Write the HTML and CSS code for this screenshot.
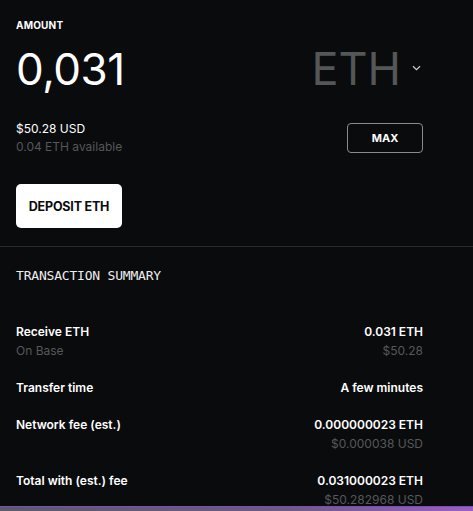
FILE: index.html
```html
<!DOCTYPE html>
<html lang="en">

<head>
    <meta charset="UTF-8">
    <meta name="viewport" content="width=device-width, initial-scale=1.0">
    <title>deposit</title>
    <link rel="stylesheet" href="styles.css">
</head>

<body>

    <section class="amount-panel">
        <div class="label">AMOUNT</div>
        <div class="amount-row">
            <div class="amount-value">0,031</div>
            <div class="token-select">
                <span class="token-name">ETH</span>
                <svg class="chevron" width="9" height="6" viewBox="0 0 9 6">
                    <path d="M1 1.2 L4.5 4.6 L8 1.2" fill="none" stroke="#cfcfcf" stroke-width="1.2" />
                </svg>
            </div>
        </div>

        <div class="balance-row">
            <div>
                <div class="usd">$50.28 USD</div>
                <div class="available">0.04 ETH available</div>
            </div>
            <button class="max-btn">MAX</button>
        </div>

        <button class="deposit-btn">DEPOSIT ETH</button>
    </section>

    <section class="summary">
        <h2>TRANSACTION SUMMARY</h2>

        <div class="summary-row">
            <div>
                <div class="key">Receive ETH</div>
                <div class="sub">On Base</div>
            </div>
            <div class="right">
                <div class="val">0.031 ETH</div>
                <div class="sub">$50.28</div>
            </div>
        </div>

        <div class="summary-row">
            <div class="key">Transfer time</div>
            <div class="val">A few minutes</div>
        </div>

        <div class="summary-row">
            <div class="key">Network fee (est.)</div>
            <div class="right">
                <div class="val">0.000000023 ETH</div>
                <div class="sub">$0.000038 USD</div>
            </div>
        </div>

        <div class="summary-row">
            <div class="key">Total with (est.) fee</div>
            <div class="right">
                <div class="val">0.031000023 ETH</div>
                <div class="sub">$50.282968 USD</div>
            </div>
        </div>
    </section>

    <div class="bottom-bar"></div>

</body>

</html>
```

FILE: styles.css
```css
body {
    font-family: Inter, "Noto Sans", sans-serif;
    background-color: #0a0b0d;
    color: #fff;
    margin: 0;
    padding: 0;
    height: 511px;
    overflow: hidden;
    position: relative;
}

.amount-panel {
    padding: 18px 50px 18px 16px;
    border-bottom: 1px solid #2a2b2e;
}

.label {
    font-size: 10px;
    font-weight: 700;
    letter-spacing: 0.2px;
    line-height: 14px;
}

.amount-row {
    display: flex;
    justify-content: space-between;
    align-items: center;
    margin-top: 10px;
    height: 54px;
}

.amount-value {
    font-size: 44px;
    font-weight: 400;
    letter-spacing: -0.5px;
    line-height: 54px;
}

.token-select {
    display: flex;
    align-items: center;
    gap: 11px;
    padding-right: 2px;
}

.token-name {
    font-size: 45px;
    color: #555657;
    line-height: 54px;
}

.chevron {
    margin-top: -3px;
}

.balance-row {
    display: flex;
    justify-content: space-between;
    align-items: center;
    margin-top: 24px;
}

.usd {
    font-size: 12px;
    line-height: 18px;
}

.available {
    font-size: 12px;
    line-height: 18px;
    color: #55575a;
}

.max-btn {
    background: transparent;
    border: 1px solid #8a8b8d;
    border-radius: 4px;
    color: #fff;
    font-family: Inter, sans-serif;
    font-size: 11px;
    font-weight: 700;
    width: 76px;
    height: 30px;
}

.deposit-btn {
    margin-top: 28px;
    background: #fff;
    color: #0a0b0d;
    border: none;
    border-radius: 5px;
    font-family: Inter, sans-serif;
    font-size: 12.5px;
    font-weight: 700;
    letter-spacing: -0.2px;
    width: 106px;
    height: 44px;
}

.summary {
    padding: 21px 50px 0 16px;
}

.summary h2 {
    font-family: "DejaVu Sans Mono", monospace;
    font-size: 13px;
    font-weight: 400;
    color: #eeeeee;
    letter-spacing: -0.2px;
    line-height: 16px;
    margin: 0 0 38px;
}

.summary-row {
    display: flex;
    justify-content: space-between;
    align-items: flex-start;
    font-size: 12px;
    line-height: 19px;
    margin-bottom: 18px;
}

.summary-row .right {
    text-align: right;
}

.key,
.val {
    font-weight: 600;
}

.sub {
    color: #56585b;
}

.bottom-bar {
    position: absolute;
    left: 0;
    right: 0;
    bottom: 0;
    height: 4px;
    border-top: 1px solid #7a4fb0;
    background: linear-gradient(90deg, #5b5a6e, #6d5a86 60%, #9a5fc8);
}
```
